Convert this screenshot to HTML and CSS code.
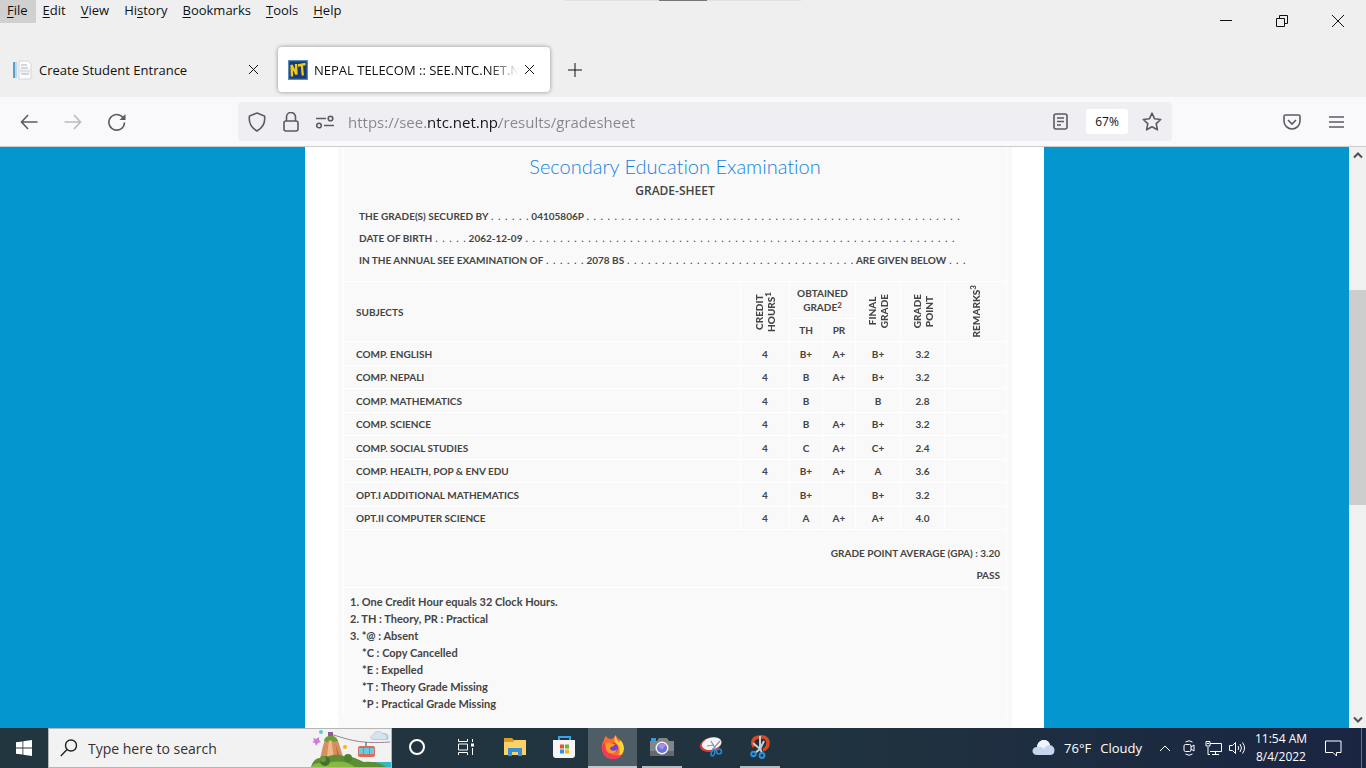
FILE: index.html
```html
<!DOCTYPE html>
<html lang="en">

<head>
    <meta charset="UTF-8">
    <meta name="viewport" content="width=device-width, initial-scale=1.0">
    <title>NEPAL TELECOM :: SEE.NTC.NET.NP</title>
    <link rel="stylesheet" href="styles.css">
</head>

<body>

    <header class="titlebar">
        <div class="drag-handle"></div>
        <div class="title-row">
            <nav class="menubar">
                <button class="open"><u>F</u>ile</button>
                <button><u>E</u>dit</button>
                <button><u>V</u>iew</button>
                <button>Hi<u>s</u>tory</button>
                <button><u>B</u>ookmarks</button>
                <button><u>T</u>ools</button>
                <button><u>H</u>elp</button>
            </nav>
            <div class="window-controls">
                <button aria-label="Minimize"><svg width="12" height="12" viewBox="0 0 12 12"><path d="M0 5.500h12" /></svg></button>
                <button aria-label="Restore"><svg width="12" height="12" viewBox="0 0 12 12"><path d="M.5 3.500h8v8h-8zM3.500 3.500v-3h8v8h-3" /></svg></button>
                <button aria-label="Close"><svg width="12" height="12" viewBox="0 0 12 12"><path d="M0 0l12 12M12 0L0 12" /></svg></button>
            </div>
        </div>
        <div class="tabs">
            <div class="tab">
                <svg class="favicon" width="20" height="20" viewBox="0 0 20 20">
                    <path d="M1 2h4v16H1z" fill="#b7d7ea" />
                    <path d="M1 2h2v16H1z" fill="#5b9fcb" />
                    <path d="M7 1h9l3 3v15H7z" fill="#fdfdfd" stroke="#d3d6db" />
                    <path d="M9 5h6M9 8h7M9 14h8" stroke="#c3c8d0" stroke-width="1.500" />
                    <path d="M8 11h10" stroke="#e0e2e6" stroke-width="3" />
                </svg>
                <span class="tab-title">Create Student Entrance</span>
                <button class="tab-close" aria-label="Close tab"><svg width="9" height="9" viewBox="0 0 9 9"><path d="M0 0l9 9M9 0L0 9" /></svg></button>
            </div>
            <div class="tab active">
                <svg class="favicon" width="20" height="20" viewBox="0 0 20 20">
                    <path d="M.5 .5h19v19H.5z" fill="#143c78" stroke="#5d8cb5" stroke-width="1.500" />
                    <path d="M4 16.500L3.500 5l5 9.500L8 4M10 5.500l7.500-1.500M13.800 5l1 10.500" fill="none" stroke="#f4c815" stroke-width="2.300" />
                </svg>
                <span class="tab-title">NEPAL TELECOM :: SEE.NTC.NET.NP</span>
                <button class="tab-close" aria-label="Close tab"><svg width="9" height="9" viewBox="0 0 9 9"><path d="M0 0l9 9M9 0L0 9" /></svg></button>
            </div>
            <button class="new-tab" aria-label="New tab"><svg width="14" height="14" viewBox="0 0 14 14"><path d="M7 0v14M0 7h14" /></svg></button>
        </div>
    </header>

    <div class="toolbar">
        <div class="nav-buttons">
            <button aria-label="Back"><svg width="18" height="16" viewBox="0 0 18 16"><path d="M8 1L1.500 8 8 15M2 8h15.500" /></svg></button>
            <button aria-label="Forward" disabled><svg width="18" height="16" viewBox="0 0 18 16"><path d="M10 1l6.500 7-6.500 7M16 8H.5" /></svg></button>
            <button aria-label="Reload"><svg width="18" height="18" viewBox="0 0 18 18"><path d="M16.500 9.500A7.800 7.800 0 1 1 13.500 3.200L16 5.500" /><path d="M17.500 1v6h-6z" fill="#5b5b66" stroke="none" /></svg></button>
        </div>
        <div class="urlbar">
            <svg width="18" height="20" viewBox="0 0 18 20"><path d="M9 1l7.500 3c.8 5-.5 11-7.500 15C2 15 .7 9 1.500 4z" /></svg>
            <svg width="16" height="20" viewBox="0 0 16 20"><path d="M3.500 9V5a4.500 4.500 0 0 1 9 0v4" /><rect x="1" y="9" width="14" height="10" rx="2" /></svg>
            <svg width="18" height="14" viewBox="0 0 18 14"><path d="M0 3.500h10M8 10.500h10" /><circle cx="14.500" cy="3.500" r="2.300" /><circle cx="3" cy="10.500" r="2.300" /></svg>
            <input class="address" type="text" aria-label="Address" value="https://see.ntc.net.np/results/gradesheet">
            <svg width="16" height="18" viewBox="0 0 16 18"><rect x="1" y="1" width="13" height="15" rx="2" /><path d="M4 5h7M4 8.500h7M4 12h4" /></svg>
            <button class="zoom">67%</button>
            <svg class="star" width="20" height="20" viewBox="0 0 20 20"><path d="M10 1.200l2.600 5.600 6.100.7-4.500 4.200 1.200 6.100L10 14.800l-5.400 3 1.200-6.100L1.300 7.500l6.100-.7z" stroke-linejoin="round" /></svg>
        </div>
        <div class="toolbar-end">
            <button aria-label="Save to Pocket"><svg width="18" height="16" viewBox="0 0 18 16"><path d="M2.500 1h13Q17 1 17 2.500V7A8 8 0 0 1 1 7V2.500Q1 1 2.500 1zM5 6l4 4 4-4" /></svg></button>
            <button aria-label="Application menu"><svg width="15" height="12" viewBox="0 0 15 12"><path d="M0 1h15M0 6h15M0 11h15" /></svg></button>
        </div>
    </div>

    <div class="viewport">
        <main class="page">
            <div class="container">
                <div class="sheet">
                    <div class="intro">
                        <h1>Secondary Education Examination</h1>
                        <h2>GRADE-SHEET</h2>
                        <p>THE GRADE(S) SECURED BY <span class="dots">. . . . . .</span> 04105806P <span class="dots">. . . . . . . . . . . . . . . . . . . . . . . . . . . . . . . . . . . . . . . . . . . . . . . . . . . . . .</span></p>
                        <p>DATE OF BIRTH <span class="dots">. . . . .</span> 2062-12-09 <span class="dots">. . . . . . . . . . . . . . . . . . . . . . . . . . . . . . . . . . . . . . . . . . . . . . . . . . . . . . . . . . . . . .</span></p>
                        <p>IN THE ANNUAL SEE EXAMINATION OF <span class="dots">. . . . . .</span> 2078 BS <span class="dots">. . . . . . . . . . . . . . . . . . . . . . . . . . . . . . . . .</span> ARE GIVEN BELOW <span class="dots">. . .</span></p>
                    </div>

                    <table>
                        <colgroup>
                            <col>
                            <col class="col-credit">
                            <col class="col-grade">
                            <col class="col-grade">
                            <col class="col-final">
                            <col class="col-point">
                            <col class="col-remarks">
                        </colgroup>
                        <thead>
                            <tr class="head-top">
                                <th rowspan="2">SUBJECTS</th>
                                <th rowspan="2"><span class="vertical">CREDIT<br>HOURS<sup>1</sup></span></th>
                                <th colspan="2">OBTAINED GRADE<sup>2</sup></th>
                                <th rowspan="2"><span class="vertical">FINAL<br>GRADE</span></th>
                                <th rowspan="2"><span class="vertical">GRADE<br>POINT</span></th>
                                <th rowspan="2"><span class="vertical">REMARKS<sup>3</sup></span></th>
                            </tr>
                            <tr class="head-sub">
                                <th>TH</th>
                                <th>PR</th>
                            </tr>
                        </thead>
                        <tbody>
                            <tr><td>COMP. ENGLISH</td><td>4</td><td>B+</td><td>A+</td><td>B+</td><td>3.2</td><td></td></tr>
                            <tr><td>COMP. NEPALI</td><td>4</td><td>B</td><td>A+</td><td>B+</td><td>3.2</td><td></td></tr>
                            <tr><td>COMP. MATHEMATICS</td><td>4</td><td>B</td><td></td><td>B</td><td>2.8</td><td></td></tr>
                            <tr><td>COMP. SCIENCE</td><td>4</td><td>B</td><td>A+</td><td>B+</td><td>3.2</td><td></td></tr>
                            <tr><td>COMP. SOCIAL STUDIES</td><td>4</td><td>C</td><td>A+</td><td>C+</td><td>2.4</td><td></td></tr>
                            <tr><td>COMP. HEALTH, POP &amp; ENV EDU</td><td>4</td><td>B+</td><td>A+</td><td>A</td><td>3.6</td><td></td></tr>
                            <tr><td>OPT.I ADDITIONAL MATHEMATICS</td><td>4</td><td>B+</td><td></td><td>B+</td><td>3.2</td><td></td></tr>
                            <tr><td>OPT.II COMPUTER SCIENCE</td><td>4</td><td>A</td><td>A+</td><td>A+</td><td>4.0</td><td></td></tr>
                        </tbody>
                    </table>

                    <div class="summary">
                        <p>GRADE POINT AVERAGE (GPA) : 3.20</p>
                        <p>PASS</p>
                    </div>

                    <div class="notes">
                        <p>1. One Credit Hour equals 32 Clock Hours.</p>
                        <p>2. TH : Theory, PR : Practical</p>
                        <p>3. *@ : Absent</p>
                        <p class="sub">*C : Copy Cancelled</p>
                        <p class="sub">*E : Expelled</p>
                        <p class="sub">*T : Theory Grade Missing</p>
                        <p class="sub">*P : Practical Grade Missing</p>
                    </div>
                </div>
            </div>
        </main>
        <div class="scrollbar">
            <svg width="17" height="17" viewBox="0 0 17 17"><path d="M5 10.500l4-4 4 4" /></svg>
            <div class="track"><div class="thumb"></div></div>
            <svg width="17" height="17" viewBox="0 0 17 17"><path d="M5 6.500l4 4 4-4" /></svg>
        </div>
    </div>

    <footer class="taskbar">
        <button class="start" aria-label="Start">
            <svg width="16" height="16" viewBox="0 0 16 16"><path d="M0 2.300L6.500 1.400v6.200H0zM7.300 1.300L16 0v7.600H7.300zM0 8.400h6.500v6.200L0 13.700zM7.300 8.400H16V16l-8.700-1.300z" fill="#fff" /></svg>
        </button>
        <div class="search">
            <svg width="18" height="18" viewBox="0 0 18 18"><circle cx="11" cy="6.500" r="5.500" fill="none" stroke="#222" stroke-width="1.400" /><path d="M7 10.500L.8 17" stroke="#222" stroke-width="1.400" /></svg>
            <input type="text" aria-label="Search" placeholder="Type here to search">
            <svg class="scene" width="80" height="38" viewBox="0 0 80 38">
                <path d="M47 33h33v5H47z" fill="#37b6c4" />
                <path d="M9 30c3-10 3-22 11-23s9 13 13 23z" fill="#d5905e" />
                <path d="M16 30c1-10 1-18 4-21l3 21z" fill="#efb98a" />
                <path d="M26 30c0-8-1-15-3-19l7 19z" fill="#b97046" />
                <path d="M13 12c1-7 12-7 14 0l-4 1-4-2-3 2z" fill="#6b9d3a" />
                <path d="M0 38c2-7 6-10 14-9 7-4 14-4 21-1 8-1 12 3 18 5 9-1 17 1 22 5z" fill="#5b8f31" />
                <path d="M0 38c3-4 9-5 15-3 9-4 21-3 29 3z" fill="#87b845" />
                <circle cx="14" cy="32" r="5" fill="#466f2b" />
                <circle cx="12" cy="30" r="3" fill="#659a38" />
                <circle cx="37" cy="29" r="4" fill="#4f812f" />
                <path d="M19 5l17 5c15 4 29 4 43 3" fill="none" stroke="#948792" />
                <path d="M17 3h5v4h-5z" fill="#8b5d91" />
                <path d="M2 9l3 1 3-2 0 3 2 2-3 1-2 3-1-3-3-1 2-1z" fill="#cc7cde" />
                <circle cx="10" cy="3" r="2" fill="#60c7cf" />
                <circle cx="34" cy="18" r="2" fill="#efb626" />
                <path d="M55 13v5" stroke="#757d86" stroke-width="1.500" />
                <rect x="47" y="17" width="17" height="11" rx="2" fill="#de6b57" />
                <path d="M48 19h4v6h-4zM53 19h5v6h-5zM59 19h4v6h-4z" fill="#65cbe2" />
                <path d="M62 11c-4-1-3-5 0-5 1-5 8-5 9-2 6-1 8 4 6 7z" fill="#b3cde1" />
                <path d="M62 10c-3-1-2-4 1-4 1-4 7-4 8-1 4 0 5 3 4 5z" fill="#d4e4ef" />
            </svg>
        </div>
        <div class="apps">
            <button aria-label="Cortana"><svg width="18" height="18" viewBox="0 0 18 18"><circle cx="9" cy="9" r="7" fill="none" stroke="#fff" stroke-width="2" /></svg></button>
            <button aria-label="Task View"><svg width="18" height="16" viewBox="0 0 18 16"><path d="M1.500 0v2.500h9V0M1.500 16v-2.500h9V16M1.500 5h9v6h-9zM15.500 0v3M15.500 9v7" fill="none" stroke="#fff" /><path d="M14 4.500h3v3h-3z" fill="#fff" /></svg></button>
            <button aria-label="File Explorer"><svg width="22" height="18" viewBox="0 0 22 18"><path d="M0 0h8l2 2h11v4H0z" fill="#d99c25" /><path d="M0 4h9l2-2h11v15H0z" fill="#fad268" /><path d="M4 18v-8h14v8h-4v-4H8v4z" fill="#398fd6" /></svg></button>
            <button aria-label="Microsoft Store"><svg width="24" height="24" viewBox="0 0 24 24"><path d="M7 6V2h11v4" fill="none" stroke="#36a5e5" stroke-width="2" /><path d="M1 5h22v15q0 3-3 3H4q-3 0-3-3z" fill="#f5f5f5" /><path d="M8 9.500h4v4H8z" fill="#e6532d" /><path d="M13 9.500h4v4h-4z" fill="#77af32" /><path d="M8 14.500h4v4H8z" fill="#2698d8" /><path d="M13 14.500h4v4h-4z" fill="#f5b51e" /></svg></button>
            <button class="current" aria-label="Firefox"><svg width="24" height="24" viewBox="0 0 24 24">
                <path d="M3 5c0-2 1-3 2-4 1 2 3 3 5 3 3 0 3-3 5-4 0 2 2 3 4 5 7 6 4 18-7 19C2 24-2 13 3 5z" fill="#ff6b2d" />
                <path d="M15 0c-1 4 2 5 3 8l1-3c6 5 5 15-3 18 5-6 2-13-1-15-2-2-2-5 0-8z" fill="#ffd636" />
                <path d="M1 13c0 6 5 11 11 11 5 0 8-2 10-5-6 3-13 1-16-5-2-3-1-6-1-7-2 1-4 3-4 6z" fill="#f33a58" />
                <circle cx="12" cy="13" r="5" fill="#7542c9" />
                <path d="M4 8c4-2 6 1 10 1-1 3-4 2-5 4 0 3 5 4 7 1-1 6-10 6-11 0z" fill="#ff9a27" />
            </svg></button>
            <button class="running" aria-label="Camera"><svg width="26" height="20" viewBox="0 0 26 20"><path d="M2 1h5v3H2z" fill="#2c9de4" /><path d="M1 4h7l2-3h8l2 3h5v15H1z" fill="#80858a" /><path d="M1 14h24v5H1z" fill="#64696e" /><circle cx="13" cy="11" r="6.500" fill="#f2f2f5" /><circle cx="13" cy="11" r="5" fill="#6674d7" /><path d="M9 9a5 5 0 0 1 8-1l-4 5z" fill="#b18bea" /></svg></button>
            <button aria-label="Snipping Tool"><svg width="24" height="22" viewBox="0 0 24 22"><ellipse cx="11.500" cy="8.500" rx="11" ry="7" fill="#d63a38" transform="rotate(-14 12 8)" /><ellipse cx="12.500" cy="7.500" rx="10" ry="6" fill="#f4f5f7" transform="rotate(-14 13 7)" /><path d="M12 5l5 9M21 5l-8 9M8 10l7-1" stroke="#8c979f" stroke-width="1.200" /><ellipse cx="14" cy="17" rx="1.700" ry="3" fill="none" stroke="#2786cd" stroke-width="1.600" transform="rotate(20 14 17)" /><circle cx="20" cy="15.500" r="2.500" fill="none" stroke="#2786cd" stroke-width="1.600" /></svg></button>
            <button class="running" aria-label="Snip &amp; Sketch"><svg width="20" height="24" viewBox="0 0 20 24"><path d="M4 12C1 6 4 2.500 9 2c6-1 9 2 9 6 0 4-2 6-5 7" fill="none" stroke="#d74b22" stroke-width="3.500" /><path d="M10 1v12l2 5M14 6l-4 8-5 4M3 8l7 6" fill="none" stroke="#c9d0d4" stroke-width="2" /><circle cx="3.500" cy="19" r="2.200" fill="none" stroke="#2a91df" stroke-width="2" /><circle cx="12" cy="20.500" r="2.400" fill="none" stroke="#2a91df" stroke-width="2" /></svg></button>
        </div>
        <div class="tray">
            <button class="weather">
                <svg width="23" height="16" viewBox="0 0 23 16"><path d="M5 15C-1 15-1 7 5 7c1-9 12-9 13-2 6 1 6 10 0 10z" fill="#c5d5f1" /><path d="M5 7c1-9 12-9 13-2-3 0-5 2-6 4-2-2-4-3-7-2z" fill="#eef3fc" /></svg>
                <span>76°F</span><span>Cloudy</span>
            </button>
            <button aria-label="Show hidden icons"><svg width="12" height="8" viewBox="0 0 12 8"><path d="M1 7l5-5 5 5" /></svg></button>
            <button aria-label="Meet Now"><svg width="12" height="16" viewBox="0 0 12 16"><rect x="1" y="4.500" width="7" height="7" rx="1.500" /><path d="M8 7l3-2v6L8 9M2.500 2q3.500-2.500 7 0M2.500 14q3.500 2.500 7 0" /></svg></button>
            <button aria-label="Network"><svg width="17" height="15" viewBox="0 0 17 15"><path d="M5 2.500h11.500v8H5M10.500 10.500v3M7 13.500h7M3 6v7.500h2M1 .5h4v4.500H1zM2 2.500h2" /></svg></button>
            <button aria-label="Volume"><svg width="17" height="14" viewBox="0 0 17 14"><path d="M.5 4.500h3l3-3v11l-3-3h-3zM9 5q1.500 2 0 4M11 3q3 4 0 8M13.500 1.500q4 5.500 0 11" /></svg></button>
            <button class="clock">11:54 AM<br>8/4/2022</button>
            <button class="notify" aria-label="Notifications"><svg width="17" height="17" viewBox="0 0 17 17"><path d="M.5 1h15.500v11.500h-4.500v3.500l-3.500-3.500H.5z" /></svg></button>
            <div class="show-desktop"></div>
        </div>
    </footer>

</body>

</html>
```
FILE: styles.css
```css
* {
    box-sizing: border-box;
}

body {
    margin: 0;
    height: 100vh;
    display: flex;
    flex-direction: column;
    overflow: hidden;
    font-family: "Open Sans", sans-serif;
    font-size: 13px;
    color: #111;
}

button {
    background: none;
    border: none;
    padding: 0;
    font: inherit;
    color: inherit;
    display: flex;
    align-items: center;
    justify-content: center;
}

svg {
    display: block;
    flex: none;
}

h1,
h2,
p {
    margin: 0;
}

/* title bar */
.titlebar {
    position: relative;
    background-color: #efefef;
}

.drag-handle {
    position: absolute;
    top: 0;
    left: 50%;
    width: 48px;
    height: 1px;
    margin-left: -24px;
    background-color: #777;
    box-shadow: -94px 0 #e0e0e0, 94px 0 #e0e0e0, -48px 0 #e0e0e0, 48px 0 #e0e0e0;
}

.title-row {
    display: flex;
    justify-content: space-between;
    height: 42px;
}

.menubar {
    display: flex;
    height: 23px;
}

.menubar button {
    display: block;
    padding: 0 8px 3px 7px;
    line-height: 20px;
}

.menubar .open {
    background-color: #d0d0d0;
}

.menubar u {
    text-underline-offset: 2px;
}

.window-controls {
    display: flex;
}

.window-controls button {
    width: 56px;
}

.window-controls svg,
.tab-close svg,
.new-tab svg {
    fill: none;
    stroke: #111;
}

.tabs {
    display: flex;
    align-items: center;
    height: 55px;
    padding: 0 6px;
}

.tab {
    display: flex;
    align-items: center;
    gap: 7px;
    width: 272px;
    height: 45px;
    padding: 0 15px 0 6px;
}

.tab.active {
    gap: 6px;
    padding: 0 11px 0 10px;
    background-color: #fff;
    border-radius: 4px;
    box-shadow: 0 0 4px rgba(0, 0, 0, 0.4);
}

.tab-title {
    flex: 1;
    overflow: hidden;
    white-space: nowrap;
}

.tab.active .tab-title {
    mask-image: linear-gradient(to left, transparent, #000 30px);
}

.tab-close {
    width: 20px;
    height: 20px;
    margin-left: -6px;
}

.new-tab {
    width: 50px;
    height: 40px;
}

/* address toolbar */
.toolbar {
    display: flex;
    align-items: center;
    height: 50px;
    background-color: #f9f9fb;
    border-bottom: 1px solid #ccc;
}

.toolbar svg {
    fill: none;
    stroke: #5b5b66;
    stroke-width: 1.6;
}

.nav-buttons {
    display: flex;
    width: 238px;
    padding-left: 7px;
}

.nav-buttons button {
    width: 44px;
    height: 40px;
}

.nav-buttons button:disabled {
    opacity: 0.4;
}

.urlbar {
    flex: 1;
    display: flex;
    align-items: center;
    gap: 17px;
    height: 39px;
    padding: 0 10px;
    background-color: #efeef3;
    border-radius: 4px;
}

.address {
    flex: 1;
    min-width: 0;
    padding: 0;
    margin-left: -3px;
    border: none;
    outline: none;
    font-family: "Open Sans", sans-serif;
    font-size: 15px;
    color: transparent;
    background: linear-gradient(to right, #85858c 80px, #15141a 80px, #15141a 151px, #85858c 151px);
    -webkit-background-clip: text;
    background-clip: text;
}

.zoom {
    width: 42px;
    height: 25px;
    background-color: #fff;
    border-radius: 3px;
    font-size: 12px;
}

.star {
    margin-left: -3px;
}

.toolbar-end {
    display: flex;
    width: 194px;
    padding-right: 8px;
    justify-content: flex-end;
}

.toolbar-end button {
    width: 44px;
    height: 40px;
}

/* web page */
.viewport {
    flex: 1;
    display: flex;
    min-height: 0;
}

.page {
    flex: 1;
    overflow: hidden;
    background-color: #0396cf;
}

.container {
    max-width: 739px;
    min-height: 100%;
    margin: 0 auto;
    padding: 0 32px 0 33px;
    background-color: #fff;
}

.sheet {
    min-height: 620px;
    padding: 0 5px;
    background-color: #f9f9f9;
    font-family: Lato, sans-serif;
    font-size: 10px;
    font-weight: 700;
    font-variant-ligatures: none;
    color: #444;
}

.intro,
.summary,
.notes {
    border: 1px solid #fff;
    border-width: 0 1px;
}

.intro {
    height: 134px;
    padding: 7px 15px 0;
}

.intro h1 {
    font-size: 20px;
    font-weight: 300;
    line-height: 24px;
    text-align: center;
    color: #1583dd;
}

.intro h2 {
    margin-bottom: 2px;
    font-family: "Open Sans", sans-serif;
    font-size: 12px;
    font-weight: 600;
    line-height: 25px;
    text-align: center;
}

.intro p {
    line-height: 22px;
    white-space: nowrap;
}

.dots {
    font-family: "DejaVu Sans", sans-serif;
    font-size: 11px;
    font-weight: 400;
    line-height: 1;
}

table {
    width: 100%;
    table-layout: fixed;
    border-collapse: collapse;
}

.col-credit {
    width: 49px;
}

.col-grade {
    width: 33px;
}

.col-final {
    width: 45px;
}

.col-point {
    width: 44px;
}

.col-remarks {
    width: 62px;
}

th,
td {
    padding: 0;
    border: 1px solid #fff;
    text-align: center;
    font-weight: 700;
}

th:first-child[rowspan],
td:first-child {
    padding-left: 12px;
    text-align: left;
}

.head-top {
    height: 37px;
    line-height: 14px;
}

.head-sub {
    height: 23px;
}

sup {
    font-size: 8px;
    line-height: 0;
    vertical-align: 3px;
}

.vertical {
    display: inline-block;
    vertical-align: middle;
    writing-mode: vertical-rl;
    transform: rotate(180deg);
    line-height: 12px;
    text-align: center;
    font-weight: 900;
}

tbody tr {
    height: 24px;
}

tbody tr:nth-child(even) {
    height: 23px;
}

.summary {
    padding: 12px 6px 1px;
    border-bottom-width: 1px;
    line-height: 22px;
    text-align: right;
}

.notes {
    padding: 5px 6px;
    font-size: 11px;
    line-height: 17px;
}

.notes .sub {
    padding-left: 12px;
}

.scrollbar {
    display: flex;
    flex-direction: column;
    width: 17px;
    background-color: #f0f0f0;
}

.scrollbar svg {
    fill: none;
    stroke: #505050;
    stroke-width: 2;
}

.track {
    flex: 1;
    padding-top: 126px;
}

.thumb {
    height: 51%;
    background-color: #cdcdcd;
}

/* taskbar */
.taskbar {
    display: flex;
    height: 40px;
    background: linear-gradient(to right, #22363f, #20333f 60%, #1a2542);
    color: #fff;
}

.start {
    width: 48px;
}

.search {
    display: flex;
    align-items: center;
    width: 344px;
    padding-left: 11px;
    background-color: #f2f2f2;
    border: 1px solid #b5b5b5;
}

.search input {
    flex: 1;
    min-width: 0;
    padding: 0 0 0 10px;
    border: none;
    outline: none;
    background: none;
    font-family: "Open Sans", sans-serif;
    font-size: 14px;
}

.search input::placeholder {
    color: #333;
}

.apps {
    flex: 1;
    display: flex;
}

.apps button {
    width: 49px;
    border-bottom: 2px solid transparent;
}

.apps .current {
    background-color: #4e5d66;
    border-color: #c0c6c9;
}

.apps .running {
    background: linear-gradient(#b4bbbf, #b4bbbf) center bottom / 40px 2px no-repeat border-box;
}

.tray {
    display: flex;
}

.tray button {
    width: 24px;
}

.tray button > svg {
    fill: none;
    stroke: #fff;
}

.tray .weather {
    width: auto;
    gap: 9px;
    margin-right: 11px;
}

.tray .weather svg {
    stroke: none;
}

.tray .clock {
    width: 64px;
    font-size: 12px;
    line-height: 18px;
    text-align: center;
}

.tray .notify {
    width: 40px;
}

.show-desktop {
    width: 5px;
    margin-left: 8px;
    border-left: 1px solid #667080;
}
```
